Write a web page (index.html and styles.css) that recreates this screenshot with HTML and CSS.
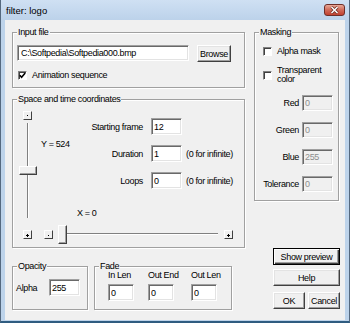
FILE: index.html
```html
<!DOCTYPE html>
<html>
<head>
  <title>filter: logo</title>
  <link rel="stylesheet" href="styles.css">
</head>
<body>
  <div class="window">
    <div class="titlebar">
      <span class="title">filter: logo</span>
      <span class="close">
        <svg width="11" height="8" viewBox="0 0 11 8">
          <path d="M2.5 1l6 6M8.5 1l-6 6" stroke="#6a2a22" stroke-width="3"/>
          <path d="M2.5 1l6 6M8.5 1l-6 6" stroke="#fff" stroke-width="1.5"/>
        </svg>
      </span>
    </div>

    <div class="client">
      <div class="col-left">

        <div class="group group-file">
          <span class="legend">Input file</span>
          <div class="file-row">
            <input class="field field-file" type="text" value="C:\Softpedia\Softpedia000.bmp">
            <button class="btn btn-browse">Browse</button>
          </div>
          <div class="check check-anim">
            <span class="box">
              <svg width="7" height="7" viewBox="0 0 7 7"><polyline points="0.8,3.2 2.6,5.2 6.2,1" fill="none" stroke="#000" stroke-width="1.6"/></svg>
            </span>
            <span>Animation sequence</span>
          </div>
        </div>

        <div class="group group-space">
          <span class="legend">Space and time coordinates</span>
          <div class="space-main">
            <div class="vslider">
              <span class="mini">
                <svg width="7" height="7" viewBox="0 0 7 7"><rect x="3" y="3" width="1" height="1"/></svg>
              </span>
              <div class="vtrack">
                <span class="thumb thumb-v" style="top: 43px"></span>
              </div>
            </div>
            <div class="coords">
              <div class="coords-grid">
                <span class="ypos">Y = 524</span>
                <span class="lbl">Starting frame</span>
                <input class="field field-num" type="text" value="12">
                <span class="lbl">Duration</span>
                <input class="field field-num" type="text" value="1">
                <span class="note">(0 for infinite)</span>
                <span class="lbl">Loops</span>
                <input class="field field-num" type="text" value="0">
                <span class="note">(0 for infinite)</span>
              </div>
              <div class="xpos">X = 0</div>
            </div>
          </div>
          <div class="hrow">
            <span class="mini">
              <svg width="7" height="7" viewBox="0 0 7 7"><rect x="2" y="4" width="3" height="1"/><rect x="3" y="3" width="1" height="3"/></svg>
            </span>
            <span class="mini mini-minus">
              <svg width="7" height="7" viewBox="0 0 7 7"><rect x="3" y="4" width="1" height="1"/></svg>
            </span>
            <div class="htrack">
              <span class="thumb thumb-h" style="left: 0px"></span>
            </div>
            <span class="mini mini-end">
              <svg width="7" height="7" viewBox="0 0 7 7"><rect x="2" y="4" width="3" height="1"/><rect x="3" y="3" width="1" height="3"/></svg>
            </span>
          </div>
        </div>

        <div class="bottom-row">
          <div class="group group-opacity">
            <span class="legend">Opacity</span>
            <div class="alpha-row">
              <span class="alpha-label">Alpha</span>
              <input class="field field-num" type="text" value="255">
            </div>
          </div>
          <div class="group group-fade">
            <span class="legend">Fade</span>
            <div class="fade-grid">
              <span>In Len</span>
              <span>Out End</span>
              <span>Out Len</span>
              <input class="field field-fade" type="text" value="0">
              <input class="field field-fade" type="text" value="0">
              <input class="field field-fade" type="text" value="0">
            </div>
          </div>
        </div>
      </div>

      <div class="col-right">
        <div class="group group-mask">
          <span class="legend">Masking</span>
          <div class="check">
            <span class="box"></span>
            <span>Alpha mask</span>
          </div>
          <div class="check check-trans">
            <span class="box"></span>
            <span>Transparent<br>color</span>
          </div>
          <div class="mask-grid">
            <span class="lbl-r">Red</span>
            <input class="field field-mask" type="text" value="0" disabled>
            <span class="lbl-r">Green</span>
            <input class="field field-mask" type="text" value="0" disabled>
            <span class="lbl-r">Blue</span>
            <input class="field field-mask" type="text" value="255" disabled>
            <span class="lbl-r">Tolerance</span>
            <input class="field field-mask" type="text" value="0" disabled>
          </div>
        </div>

        <div class="actions">
          <button class="btn btn-default">Show preview</button>
          <button class="btn btn-help">Help</button>
          <div class="ok-row">
            <button class="btn btn-ok">OK</button>
            <button class="btn btn-ok">Cancel</button>
          </div>
        </div>
      </div>
    </div>
  </div>
</body>
</html>
```

FILE: styles.css
```css
body {
  margin: 0;
  background: #fff;
  font-family: "Liberation Sans", Arial, sans-serif;
  font-size: 9px;
  letter-spacing: -0.35px;
  color: #000;
}

.window {
  width: 350px;
  height: 323px;
  box-sizing: border-box;
  display: flex;
  flex-direction: column;
  background: #bdd3ea;
  border: 1px solid #55697f;
  border-top: none;
  border-bottom: 2px solid #2f5c80;
  white-space: nowrap;
}

/* title bar */

.titlebar {
  height: 20px;
  flex: none;
  display: flex;
  align-items: flex-start;
  justify-content: space-between;
  padding: 0 4px 0 5px;
  background: linear-gradient(#cfe0f3, #bcd2ea);
}

.title {
  font-size: 9.5px;
  letter-spacing: 0;
  line-height: 21px;
}

.close {
  width: 21px;
  height: 12px;
  margin-top: 4px;
  box-sizing: border-box;
  border: 1px solid #6e2e28;
  border-radius: 3px;
  background: linear-gradient(#e8a898, #d06a58 50%, #c1402f);
  display: flex;
  align-items: center;
  justify-content: center;
}

/* client area */

.client {
  flex: 1;
  margin: 0 4px 1px 4px;
  padding: 12px 5px 0 7px;
  background: #f0f0f0;
  display: flex;
  gap: 9px;
}

.col-left {
  width: 233px;
  display: flex;
  flex-direction: column;
}

.col-right {
  width: 86px;
  display: flex;
  flex-direction: column;
}

/* group boxes */

.group {
  position: relative;
  box-sizing: border-box;
  border: 1px solid #a0a0a0;
  box-shadow: inset 1px 1px #fff, 1px 1px #fff;
}

.legend {
  position: absolute;
  top: -7px;
  left: 4px;
  padding: 0 1px;
  background: #f0f0f0;
  line-height: 12px;
}

/* controls */

.field {
  box-sizing: border-box;
  margin: 0;
  padding: 0 0 0 2px;
  font: inherit;
  letter-spacing: inherit;
  color: #000;
  background: #fff;
  border: 1px solid;
  border-color: #a0a0a0 #fff #fff #a0a0a0;
  box-shadow: inset 1px 1px #696969, inset -1px -1px #e3e3e3;
  outline: none;
}

.field:disabled {
  background: #f0f0f0;
  color: #8d8d8d;
}

.btn {
  box-sizing: border-box;
  margin: 0;
  padding: 0;
  font: inherit;
  letter-spacing: inherit;
  color: #000;
  background: #f0f0f0;
  border: 1px solid;
  border-color: #fff #404040 #404040 #fff;
  box-shadow: inset -1px -1px #a0a0a0, inset 1px 1px #e3e3e3;
}

.btn-default {
  border-color: #000;
  box-shadow: inset 1px 1px #fff, inset -1px -1px #404040, inset -2px -2px #a0a0a0;
}

.check {
  display: flex;
  align-items: center;
  line-height: 12px;
}

.box {
  width: 9px;
  height: 9px;
  flex: none;
  box-sizing: border-box;
  margin-right: 5px;
  border: 1px solid;
  border-color: #808080 #fff #fff #808080;
  box-shadow: inset 1px 1px #404040;
  background: #fff;
  display: flex;
}

.mini {
  width: 9px;
  height: 9px;
  flex: none;
  box-sizing: border-box;
  border: 1px solid;
  border-color: #fff #404040 #404040 #fff;
  background: #f0f0f0;
  display: flex;
}

.thumb {
  position: absolute;
  box-sizing: border-box;
  border: 1px solid;
  border-color: #fff #404040 #404040 #fff;
  box-shadow: inset -1px -1px #a0a0a0;
  background: #f0f0f0;
}

/* input file */

.group-file {
  height: 56px;
  padding: 12px 0 0 4px;
}

.file-row {
  display: flex;
  align-items: flex-start;
}

.field-file {
  width: 172px;
  height: 16px;
  padding-left: 3px;
}

.btn-browse {
  width: 34px;
  height: 17px;
  margin-left: 8px;
}

.check-anim {
  margin: 7px 0 0 1px;
}

/* space and time */

.group-space {
  height: 149px;
  margin-top: 11px;
  padding: 11px 0 0 6px;
}

.space-main {
  display: flex;
}

.vslider {
  width: 18px;
  display: flex;
  flex-direction: column;
}

.vslider .mini {
  margin-left: 4px;
}

.vtrack {
  position: relative;
  width: 18px;
  height: 95px;
  margin-top: 3px;
  background: linear-gradient(to right, transparent 8px, #808080 8px, #808080 9px, #fff 9px, #fff 10px, transparent 10px);
}

.thumb-v {
  left: 0;
  width: 18px;
  height: 9px;
}

.coords {
  flex: 1;
  padding-top: 7px;
}

.coords-grid {
  display: grid;
  grid-template-columns: 54px 52px 39px auto;
  grid-template-rows: repeat(3, 17px);
  row-gap: 10px;
  align-items: center;
  line-height: 12px;
}

.ypos {
  grid-column: 1;
  grid-row: 1 / span 2;
  padding-left: 4px;
  margin-top: 8px;
}

.lbl {
  grid-column: 2;
  text-align: right;
  padding-top: 1px;
}

.field-num {
  width: 31px;
  height: 17px;
  justify-self: end;
}

.note {
  padding: 1px 0 0 4px;
}

.xpos {
  margin-top: 18px;
  padding-left: 40px;
  line-height: 12px;
}

.hrow {
  height: 19px;
  margin-top: 6px;
  padding-left: 4px;
  display: flex;
  align-items: center;
}

.mini-minus {
  margin-left: 12px;
}

.htrack {
  position: relative;
  width: 160px;
  height: 19px;
  margin-left: 5px;
  background: linear-gradient(transparent 8px, #808080 8px, #808080 9px, #fff 9px, #fff 10px, transparent 10px);
}

.thumb-h {
  top: 0;
  width: 9px;
  height: 19px;
}

.mini-end {
  margin-left: 6px;
}

/* opacity and fade */

.bottom-row {
  display: flex;
  gap: 6px;
  margin-top: 18px;
}

.group-opacity {
  width: 76px;
  height: 44px;
  padding: 12px 0 0 3px;
}

.alpha-row {
  display: flex;
  align-items: center;
}

.alpha-label {
  width: 33px;
}

.group-fade {
  width: 138px;
  height: 44px;
  padding: 2px 0 0 13px;
}

.fade-grid {
  display: grid;
  grid-template-columns: 40px 43px 30px;
  row-gap: 3px;
  line-height: 12px;
}

.field-fade {
  width: 26px;
  height: 17px;
}

/* masking */

.group-mask {
  width: 85px;
  height: 169px;
  padding: 12px 0 0 8px;
}

.check-trans {
  margin-top: 9px;
  line-height: 9px;
}

.mask-grid {
  margin: 11px 0 0 -8px;
  display: grid;
  grid-template-columns: 44px 34px;
  grid-auto-rows: 16px;
  row-gap: 11px;
  align-items: center;
  line-height: 12px;
}

.lbl-r {
  text-align: right;
}

.field-mask {
  width: 31px;
  height: 16px;
  justify-self: end;
}

/* buttons */

.actions {
  margin-top: 47px;
  padding-left: 19px;
  display: flex;
  flex-direction: column;
}

.actions .btn {
  height: 17px;
}

.btn-help {
  margin-top: 4px;
}

.ok-row {
  margin-top: 6px;
  display: flex;
  gap: 3px;
}

.btn-ok {
  width: 32px;
}
```
